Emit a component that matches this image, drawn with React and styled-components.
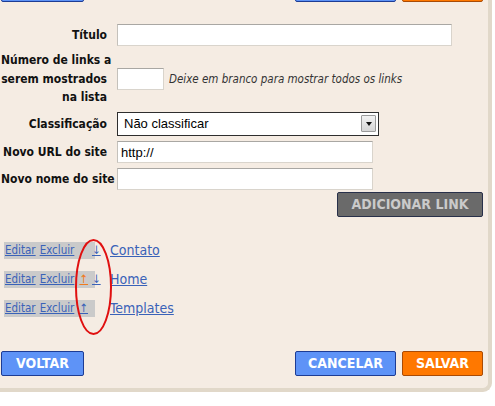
import React from 'react';
import styled, {createGlobalStyle} from 'styled-components';

const GlobalStyle = createGlobalStyle`
    html, body {
        margin: 0;
        padding: 0;
        background: #ffffff;
    }
    body {
        font-family: "DejaVu Sans Condensed", "Liberation Sans", sans-serif;
        overflow: hidden;
    }
`

const Panel = styled.div`
    width: 482px;
    padding: 0 5px 12px 1px;
    background: #f5ece3;
    border-right: 4px solid #e1d8c9;
    border-bottom: 4px solid #e1d8c9;
    border-bottom-right-radius: 9px;
`

const ButtonBar = styled.div`
    display: flex;
    justify-content: space-between;
    align-items: center;
    margin-top: ${props => props.$top || 0}px;
`

const ButtonGroup = styled.div`
    display: flex;
    gap: 6px;
`

const colors = {
    blue: {bg: '#5e93f7', border: '#1d3c94', text: '#ffffff'},
    orange: {bg: '#ff7800', border: '#a94b05', text: '#ffffff'},
    gray: {bg: '#6a6a6a', border: '#28304a', text: '#cacaca'},
}

const Button = styled.button`
    box-sizing: border-box;
    height: 25px;
    width: ${props => props.$width}px;
    padding: 0;
    background: ${props => colors[props.$kind].bg};
    color: ${props => colors[props.$kind].text};
    border: 1px solid ${props => colors[props.$kind].border};
    border-radius: 2px;
    font-family: "DejaVu Sans Condensed", "Liberation Sans", sans-serif;
    font-weight: bold;
    font-size: 14px;
    cursor: pointer;
`

const Form = styled.div`
    display: flex;
    flex-direction: column;
    margin-top: 22px;
`

const Row = styled.div`
    display: flex;
    align-items: center;
    margin-top: ${props => props.$gap || 0}px;
`

const Label = styled.div`
    width: 106px;
    flex-shrink: 0;
    margin-right: 10px;
    text-align: right;
    font-size: 12px;
    font-weight: bold;
    line-height: ${props => props.$lh || 18}px;
    color: #111111;
    white-space: nowrap;
`

const TextInput = styled.input`
    box-sizing: border-box;
    width: ${props => props.$width}px;
    height: 22px;
    margin: 0;
    padding: 1px 3px 0;
    background: #ffffff;
    border: 1px solid #d9d4cc;
    border-top-color: #a9a7a3;
    border-left-color: #c4c1bb;
    font-family: "Liberation Sans", Arial, sans-serif;
    font-size: 13px;
    color: #000000;
    outline: none;
`

const Hint = styled.span`
    margin-left: 5px;
    font-size: 11.5px;
    font-style: italic;
    color: #333333;
`

const SelectBox = styled.div`
    box-sizing: border-box;
    width: 262px;
    height: 24px;
    display: flex;
    align-items: center;
    justify-content: space-between;
    padding: 0 2px 0 6px;
    background: #ffffff;
    border: 1px solid #2e2e2e;
    font-family: "Liberation Sans", Arial, sans-serif;
    font-size: 13px;
    color: #000000;
`

const SelectArrow = styled.span`
    box-sizing: border-box;
    width: 15px;
    height: 17px;
    display: flex;
    align-items: center;
    justify-content: center;
    background: linear-gradient(#f2f2f2, #d6d6d6);
    border: 1px solid #9a9a9a;
    border-radius: 1px;

    &::after {
        content: '';
        border-left: 3.5px solid transparent;
        border-right: 3.5px solid transparent;
        border-top: 4px solid #111111;
    }
`

const AddRow = styled.div`
    display: flex;
    justify-content: flex-end;
    margin-top: 2px;
`

const LinkList = styled.div`
    position: relative;
    display: flex;
    flex-direction: column;
    gap: 12px;
    margin: 25px 0 34px 3px;
`

const LinkRow = styled.div`
    display: flex;
    align-items: center;
`

const Actions = styled.div`
    display: flex;
    align-items: center;
    gap: 4px;
    width: 90px;
    height: 17px;
    padding-left: 1px;
    background: #cacaca;
    font-size: 11.5px;
`

const ActionLink = styled.a`
    color: ${props => props.$orange ? '#f07a1e' : '#3a62b8'};
    text-decoration: underline;
    visibility: ${props => props.$hidden ? 'hidden' : 'visible'};
    cursor: pointer;
`

const Arrows = styled.span`
    display: flex;
    gap: 4px;
    margin-left: 1px;
`

const TitleLink = styled.a`
    margin-left: 15px;
    font-size: 14px;
    color: #3a62b8;
    text-decoration: underline;
    cursor: pointer;
`

const Marker = styled.svg`
    position: absolute;
    left: 68px;
    top: -5px;
    pointer-events: none;
`

const links = [
    {name: 'Contato', up: false, down: true},
    {name: 'Home', up: true, down: true, upOrange: true},
    {name: 'Templates', up: true, down: false},
]

export default function App() {
    return (
        <>
            <GlobalStyle/>
            <Panel>
                <ButtonBar $top={-23}>
                    <Button $kind="blue" $width={83}>VOLTAR</Button>
                    <ButtonGroup>
                        <Button $kind="blue" $width={101}>CANCELAR</Button>
                        <Button $kind="orange" $width={81}>SALVAR</Button>
                    </ButtonGroup>
                </ButtonBar>

                <Form>
                    <Row>
                        <Label>Título</Label>
                        <TextInput $width={335}/>
                    </Row>
                    <Row $gap={5}>
                        <Label $lh={18.5}>Número de links a<br/>serem mostrados<br/>na lista</Label>
                        <TextInput $width={47}/>
                        <Hint>Deixe em branco para mostrar todos os links</Hint>
                    </Row>
                    <Row $gap={5}>
                        <Label>Classificação</Label>
                        <SelectBox>
                            <span>Não classificar</span>
                            <SelectArrow/>
                        </SelectBox>
                    </Row>
                    <Row $gap={5}>
                        <Label>Novo URL do site</Label>
                        <TextInput $width={256} defaultValue="http://"/>
                    </Row>
                    <Row $gap={5}>
                        <Label>Novo nome do site</Label>
                        <TextInput $width={256}/>
                    </Row>
                    <AddRow>
                        <Button $kind="gray" $width={146}>ADICIONAR LINK</Button>
                    </AddRow>
                </Form>

                <LinkList>
                    {links.map(link => (
                        <LinkRow key={link.name}>
                            <Actions>
                                <ActionLink>Editar</ActionLink>
                                <ActionLink>Excluir</ActionLink>
                                <Arrows>
                                    <ActionLink $hidden={!link.up} $orange={link.upOrange}>↑</ActionLink>
                                    <ActionLink $hidden={!link.down}>↓</ActionLink>
                                </Arrows>
                            </Actions>
                            <TitleLink>{link.name}</TitleLink>
                        </LinkRow>
                    ))}
                    <Marker width="44" height="100" viewBox="0 0 44 100">
                        <ellipse cx="21.5" cy="50" rx="17.5" ry="47" fill="none" stroke="#e01010" strokeWidth="2"/>
                    </Marker>
                </LinkList>

                <ButtonBar>
                    <Button $kind="blue" $width={83}>VOLTAR</Button>
                    <ButtonGroup>
                        <Button $kind="blue" $width={101}>CANCELAR</Button>
                        <Button $kind="orange" $width={81}>SALVAR</Button>
                    </ButtonGroup>
                </ButtonBar>
            </Panel>
        </>
    );
}
